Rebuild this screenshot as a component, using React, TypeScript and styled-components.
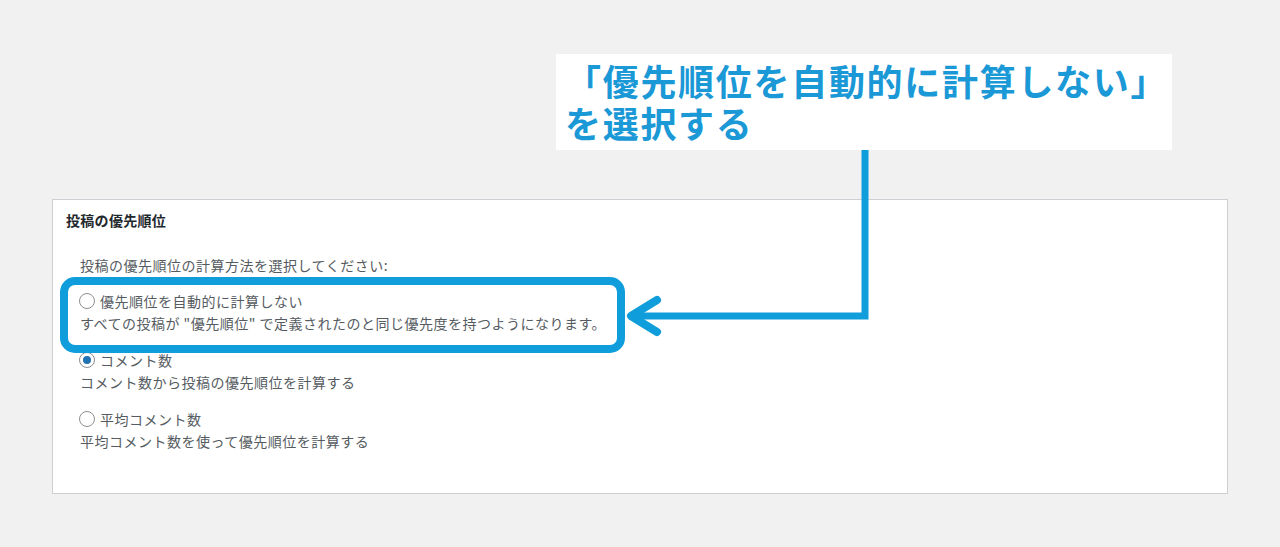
import React, { FC } from "react";
import styled, { createGlobalStyle } from "styled-components";

const GlobalStyle = createGlobalStyle`
  html, body {
    margin: 0;
    padding: 0;
    background: #f1f1f1;
  }
  body {
    font-family: "Noto Sans CJK JP", "Noto Sans", sans-serif;
  }
`;

const Page = styled.div`
  position: relative;
  width: 1280px;
  height: 547px;
  padding-top: 54px;
  box-sizing: border-box;
  overflow: hidden;
`;

const Callout = styled.div`
  margin-left: 556px;
  width: 616px;
  height: 96px;
  box-sizing: border-box;
  padding: 5px 0 0 9px;
  background: #ffffff;
  color: #1b98d6;
  font-size: 36px;
  font-weight: 700;
  line-height: 42px;
  letter-spacing: 1.7px;
`;

const Panel = styled.section`
  margin: 49px 0 0 52px;
  width: 1176px;
  height: 295px;
  box-sizing: border-box;
  background: #ffffff;
  border: 1px solid #ccd0d4;
  padding: 10px 13px;
`;

const Heading = styled.h2`
  margin: 0;
  font-size: 14px;
  font-weight: 700;
  line-height: 20px;
  color: #23282d;
  letter-spacing: 0.3px;
`;

const Form = styled.div`
  display: flex;
  flex-direction: column;
  gap: 14px;
  margin-top: 24px;
  padding-left: 14px;
  color: #555b61;
  font-size: 14px;
  line-height: 22px;
  letter-spacing: 0.5px;
`;

const Options = styled.div`
  display: flex;
  flex-direction: column;
  gap: 15px;
`;

const Option = styled.div`
  display: flex;
  flex-direction: column;
`;

const Label = styled.label`
  display: flex;
  align-items: center;
  gap: 5px;
`;

const Radio = styled.input.attrs({ type: "radio", name: "priority" })`
  appearance: none;
  margin: 0 0 0 -1px;
  width: 16px;
  height: 16px;
  border: 1px solid #8c8f94;
  border-radius: 50%;
  background: #fff;
  box-sizing: border-box;
  display: grid;
  place-items: center;

  &:checked::before {
    content: "";
    width: 8px;
    height: 8px;
    border-radius: 50%;
    background: #2271b1;
  }
`;

const Overlay = styled.svg`
  position: absolute;
  inset: 0;
  pointer-events: none;
`;

const options = [
  {
    label: "優先順位を自動的に計算しない",
    desc: "すべての投稿が \"優先順位\" で定義されたのと同じ優先度を持つようになります。",
    checked: false,
  },
  {
    label: "コメント数",
    desc: "コメント数から投稿の優先順位を計算する",
    checked: true,
  },
  {
    label: "平均コメント数",
    desc: "平均コメント数を使って優先順位を計算する",
    checked: false,
  },
];

const App: FC = () => {
  return (
    <>
      <GlobalStyle />
      <Page>
        <Callout>
          「優先順位を自動的に計算しない」
          <br />
          を選択する
        </Callout>
        <Panel>
          <Heading>投稿の優先順位</Heading>
          <Form>
            <div>投稿の優先順位の計算方法を選択してください:</div>
            <Options>
              {options.map((o) => (
                <Option key={o.label}>
                  <Label>
                    <Radio defaultChecked={o.checked} />
                    {o.label}
                  </Label>
                  <div>{o.desc}</div>
                </Option>
              ))}
            </Options>
          </Form>
        </Panel>
        <Overlay width="1280" height="547" viewBox="0 0 1280 547">
          <rect
            x="64"
            y="281"
            width="557"
            height="68"
            rx="11"
            fill="none"
            stroke="#109ddb"
            strokeWidth="8"
          />
          <path
            d="M865 150 V316 H632"
            fill="none"
            stroke="#109ddb"
            strokeWidth="7"
          />
          <path
            d="M657 300 L631 316 L657 332"
            fill="none"
            stroke="#109ddb"
            strokeWidth="8"
            strokeLinecap="round"
            strokeLinejoin="round"
          />
        </Overlay>
      </Page>
    </>
  );
};

export default App;
